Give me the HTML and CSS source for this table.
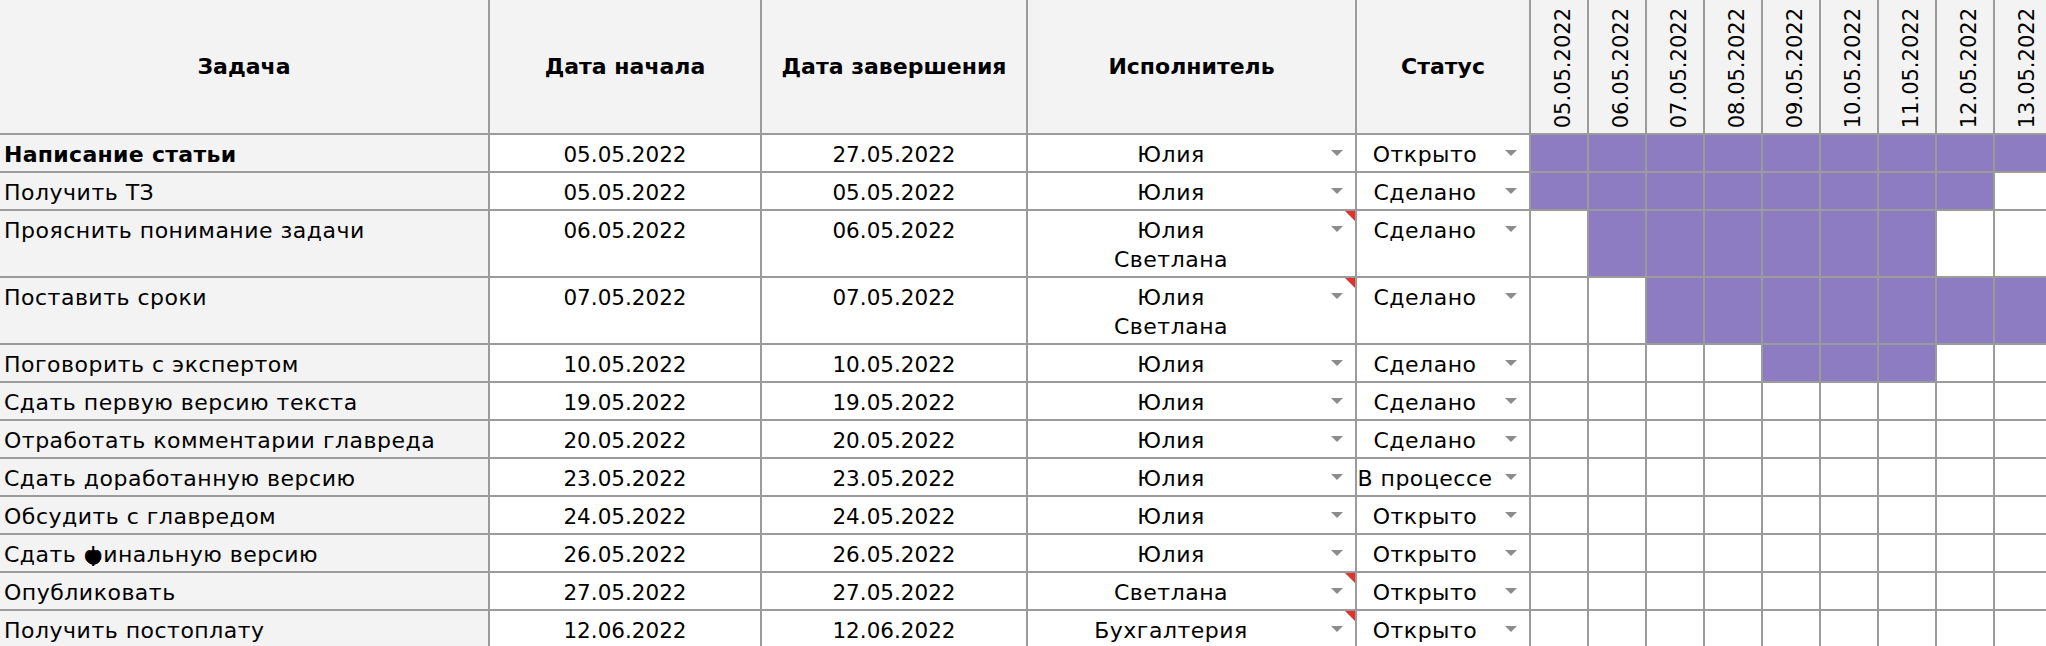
FILE: index.html
```html
<!DOCTYPE html>
<html lang="ru">
<head>
<meta charset="utf-8">
<title>Задачи</title>
<link rel="stylesheet" href="styles.css">
</head>
<body>
<div class="sheet">
  <div class="h first">Задача</div>
  <div class="h">Дата начала</div>
  <div class="h">Дата завершения</div>
  <div class="h">Исполнитель</div>
  <div class="h">Статус</div>
  <div class="h day"><span>05.05.2022</span></div>
  <div class="h day"><span>06.05.2022</span></div>
  <div class="h day"><span>07.05.2022</span></div>
  <div class="h day"><span>08.05.2022</span></div>
  <div class="h day"><span>09.05.2022</span></div>
  <div class="h day"><span>10.05.2022</span></div>
  <div class="h day"><span>11.05.2022</span></div>
  <div class="h day"><span>12.05.2022</span></div>
  <div class="h day"><span>13.05.2022</span></div>

  <div class="c task bold">Написание статьи</div>
  <div class="c date">05.05.2022</div>
  <div class="c date">27.05.2022</div>
  <div class="c dd who"><span class="v">Юлия</span><i class="arr"></i></div>
  <div class="c dd st"><span class="v">Открыто</span><i class="arr"></i></div>
  <div class="g f"></div><div class="g f"></div><div class="g f"></div><div class="g f"></div><div class="g f"></div><div class="g f"></div><div class="g f"></div><div class="g f"></div><div class="g f"></div>

  <div class="c task">Получить ТЗ</div>
  <div class="c date">05.05.2022</div>
  <div class="c date">05.05.2022</div>
  <div class="c dd who"><span class="v">Юлия</span><i class="arr"></i></div>
  <div class="c dd st"><span class="v">Сделано</span><i class="arr"></i></div>
  <div class="g f"></div><div class="g f"></div><div class="g f"></div><div class="g f"></div><div class="g f"></div><div class="g f"></div><div class="g f"></div><div class="g f"></div><div class="g"></div>

  <div class="c task">Прояснить понимание задачи</div>
  <div class="c date">06.05.2022</div>
  <div class="c date">06.05.2022</div>
  <div class="c dd who"><span class="v">Юлия<br>Светлана</span><i class="arr"></i><i class="note"></i></div>
  <div class="c dd st"><span class="v">Сделано</span><i class="arr"></i></div>
  <div class="g"></div><div class="g f"></div><div class="g f"></div><div class="g f"></div><div class="g f"></div><div class="g f"></div><div class="g f"></div><div class="g"></div><div class="g"></div>

  <div class="c task">Поставить сроки</div>
  <div class="c date">07.05.2022</div>
  <div class="c date">07.05.2022</div>
  <div class="c dd who"><span class="v">Юлия<br>Светлана</span><i class="arr"></i><i class="note"></i></div>
  <div class="c dd st"><span class="v">Сделано</span><i class="arr"></i></div>
  <div class="g"></div><div class="g"></div><div class="g f"></div><div class="g f"></div><div class="g f"></div><div class="g f"></div><div class="g f"></div><div class="g f"></div><div class="g f"></div>

  <div class="c task">Поговорить с экспертом</div>
  <div class="c date">10.05.2022</div>
  <div class="c date">10.05.2022</div>
  <div class="c dd who"><span class="v">Юлия</span><i class="arr"></i></div>
  <div class="c dd st"><span class="v">Сделано</span><i class="arr"></i></div>
  <div class="g"></div><div class="g"></div><div class="g"></div><div class="g"></div><div class="g f"></div><div class="g f"></div><div class="g f"></div><div class="g"></div><div class="g"></div>

  <div class="c task">Сдать первую версию текста</div>
  <div class="c date">19.05.2022</div>
  <div class="c date">19.05.2022</div>
  <div class="c dd who"><span class="v">Юлия</span><i class="arr"></i></div>
  <div class="c dd st"><span class="v">Сделано</span><i class="arr"></i></div>
  <div class="g"></div><div class="g"></div><div class="g"></div><div class="g"></div><div class="g"></div><div class="g"></div><div class="g"></div><div class="g"></div><div class="g"></div>

  <div class="c task">Отработать комментарии главреда</div>
  <div class="c date">20.05.2022</div>
  <div class="c date">20.05.2022</div>
  <div class="c dd who"><span class="v">Юлия</span><i class="arr"></i></div>
  <div class="c dd st"><span class="v">Сделано</span><i class="arr"></i></div>
  <div class="g"></div><div class="g"></div><div class="g"></div><div class="g"></div><div class="g"></div><div class="g"></div><div class="g"></div><div class="g"></div><div class="g"></div>

  <div class="c task">Сдать доработанную версию</div>
  <div class="c date">23.05.2022</div>
  <div class="c date">23.05.2022</div>
  <div class="c dd who"><span class="v">Юлия</span><i class="arr"></i></div>
  <div class="c dd st"><span class="v">В процессе</span><i class="arr"></i></div>
  <div class="g"></div><div class="g"></div><div class="g"></div><div class="g"></div><div class="g"></div><div class="g"></div><div class="g"></div><div class="g"></div><div class="g"></div>

  <div class="c task">Обсудить с главредом</div>
  <div class="c date">24.05.2022</div>
  <div class="c date">24.05.2022</div>
  <div class="c dd who"><span class="v">Юлия</span><i class="arr"></i></div>
  <div class="c dd st"><span class="v">Открыто</span><i class="arr"></i></div>
  <div class="g"></div><div class="g"></div><div class="g"></div><div class="g"></div><div class="g"></div><div class="g"></div><div class="g"></div><div class="g"></div><div class="g"></div>

  <div class="c task">Сдать <span class="blot">ф</span>инальную версию</div>
  <div class="c date">26.05.2022</div>
  <div class="c date">26.05.2022</div>
  <div class="c dd who"><span class="v">Юлия</span><i class="arr"></i></div>
  <div class="c dd st"><span class="v">Открыто</span><i class="arr"></i></div>
  <div class="g"></div><div class="g"></div><div class="g"></div><div class="g"></div><div class="g"></div><div class="g"></div><div class="g"></div><div class="g"></div><div class="g"></div>

  <div class="c task">Опубликовать</div>
  <div class="c date">27.05.2022</div>
  <div class="c date">27.05.2022</div>
  <div class="c dd who"><span class="v">Светлана</span><i class="arr"></i><i class="note"></i></div>
  <div class="c dd st"><span class="v">Открыто</span><i class="arr"></i></div>
  <div class="g"></div><div class="g"></div><div class="g"></div><div class="g"></div><div class="g"></div><div class="g"></div><div class="g"></div><div class="g"></div><div class="g"></div>

  <div class="c task">Получить постоплату</div>
  <div class="c date">12.06.2022</div>
  <div class="c date">12.06.2022</div>
  <div class="c dd who"><span class="v">Бухгалтерия</span><i class="arr"></i><i class="note"></i></div>
  <div class="c dd st"><span class="v">Открыто</span><i class="arr"></i></div>
  <div class="g"></div><div class="g"></div><div class="g"></div><div class="g"></div><div class="g"></div><div class="g"></div><div class="g"></div><div class="g"></div><div class="g"></div>
</div>
</body>
</html>
```

FILE: styles.css
```css
html, body {
  margin: 0;
  padding: 0;
  background: #ffffff;
  overflow: hidden;
}

body {
  font-family: "DejaVu Sans", "Noto Sans", sans-serif;
  font-size: 22px;
  letter-spacing: 0.5px;
  color: #000000;
}

.sheet {
  display: grid;
  grid-template-columns: 488px 272px 266px 329px 174px repeat(9, 58px);
  grid-template-rows: 133px 38px 38px 67px 67px repeat(8, 38px);
  width: 2051px;
}

.sheet > div {
  box-sizing: border-box;
  border-left: 2px solid #9b9b9b;
  min-width: 0;
}

.sheet > .first,
.sheet > .task {
  border-left: none;
}

.h {
  background: #f3f3f3;
  font-weight: bold;
  font-size: 22px;
  letter-spacing: 0;
  display: flex;
  align-items: center;
  justify-content: center;
  white-space: nowrap;
}

.h.day {
  font-weight: normal;
  font-size: 21px;
  align-items: flex-end;
  padding-bottom: 5px;
  padding-left: 9px;
}

.h.day span {
  writing-mode: vertical-rl;
  transform: rotate(180deg);
  line-height: 29px;
}

.c,
.g {
  border-top: 2px solid #9b9b9b;
}

.c {
  padding-top: 5px;
  line-height: 29px;
  white-space: nowrap;
}

.task {
  background: #f3f3f3;
  padding-left: 4px;
}

.bold {
  font-weight: bold;
  letter-spacing: 0.3px;
}

.date {
  text-align: center;
  font-size: 21.5px;
  letter-spacing: 0;
}

.dd {
  display: flex;
  position: relative;
}

.dd .v {
  flex: 1;
  text-align: center;
  min-width: 0;
}

.arr {
  flex: none;
  width: 0;
  height: 0;
  border-left: 6px solid transparent;
  border-right: 6px solid transparent;
  border-top: 6px solid #8c8c8c;
  margin: 10px 12px 0 17px;
}

.st .arr {
  margin-left: 12px;
}

.note {
  position: absolute;
  top: 0;
  right: 0;
  width: 0;
  height: 0;
  border-top: 10px solid #e0332e;
  border-left: 10px solid transparent;
}

.g.f {
  background: #8e7cc3;
}

.blot {
  display: inline-block;
  background: radial-gradient(circle at 50% 60%, #000 0 7px, transparent 7.6px);
}
```
